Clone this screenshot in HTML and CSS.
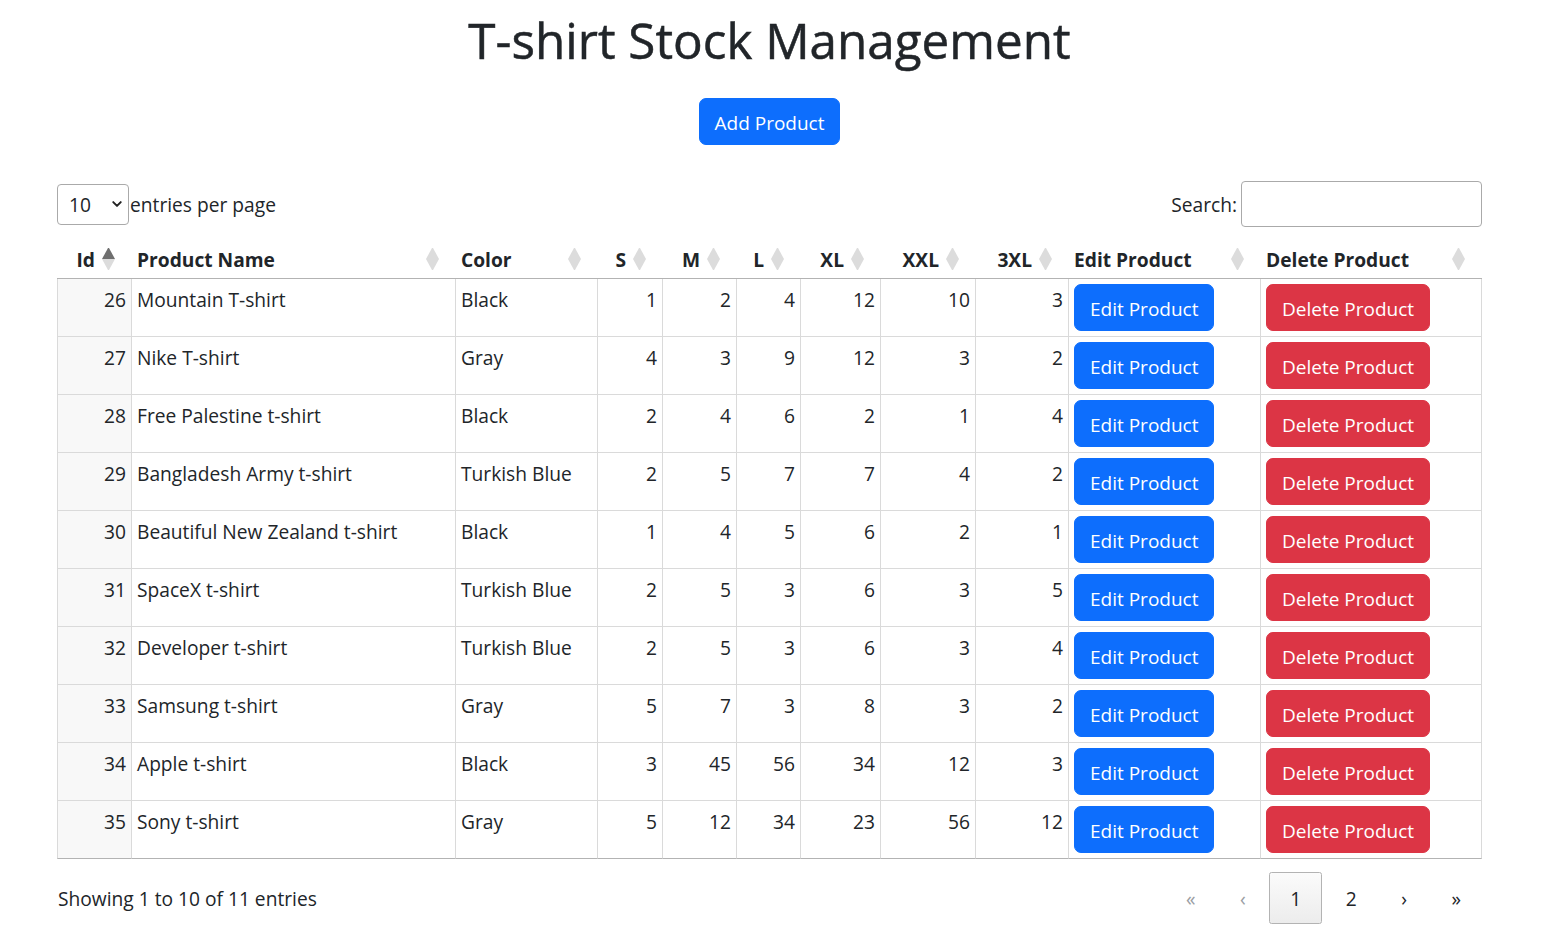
FILE: index.html
```html
<!DOCTYPE html>
<html lang="en">
<head>
<meta charset="utf-8">
<title>T-shirt Stock Management</title>
<link rel="stylesheet" href="styles.css">
</head>
<body>
<div class="page">
  <h1 class="title">T-shirt Stock Management</h1>
  <div class="add-row"><button class="btn btn-primary">Add Product</button></div>

  <div class="dt-top">
    <div class="dt-length">
      <div class="select-wrap">
        <select class="dt-select" aria-label="entries per page">
          <option>10</option><option>25</option><option>50</option>
        </select>
        <svg class="chev" viewBox="0 0 16 16" aria-hidden="true"><path d="M3 5.5l5 5 5-5" fill="none" stroke="#222" stroke-width="2.6" stroke-linecap="round" stroke-linejoin="round"/></svg>
      </div>
      <span class="dt-length-label">entries per page</span>
    </div>
    <div class="dt-search">
      <label for="q">Search:</label>
      <input id="q" class="dt-input" type="search">
    </div>
  </div>

  <table class="dt">
    <thead>
      <tr>
        <th class="num w-id"><div class="th-in"><span>Id</span><i class="sort asc"></i></div></th>
        <th class="w-name"><div class="th-in"><span>Product Name</span><i class="sort"></i></div></th>
        <th class="w-color"><div class="th-in"><span>Color</span><i class="sort"></i></div></th>
        <th class="num w-s"><div class="th-in"><span>S</span><i class="sort"></i></div></th>
        <th class="num w-m"><div class="th-in"><span>M</span><i class="sort"></i></div></th>
        <th class="num w-l"><div class="th-in"><span>L</span><i class="sort"></i></div></th>
        <th class="num w-xl"><div class="th-in"><span>XL</span><i class="sort"></i></div></th>
        <th class="num w-xxl"><div class="th-in"><span>XXL</span><i class="sort"></i></div></th>
        <th class="num w-3xl"><div class="th-in"><span>3XL</span><i class="sort"></i></div></th>
        <th class="w-edit"><div class="th-in"><span>Edit Product</span><i class="sort"></i></div></th>
        <th class="w-del"><div class="th-in"><span>Delete Product</span><i class="sort"></i></div></th>
      </tr>
    </thead>
    <tbody>
      <tr><td class="num">26</td><td>Mountain T-shirt</td><td>Black</td><td class="num">1</td><td class="num">2</td><td class="num">4</td><td class="num">12</td><td class="num">10</td><td class="num">3</td><td><button class="btn btn-primary">Edit Product</button></td><td><button class="btn btn-danger">Delete Product</button></td></tr>
      <tr><td class="num">27</td><td>Nike T-shirt</td><td>Gray</td><td class="num">4</td><td class="num">3</td><td class="num">9</td><td class="num">12</td><td class="num">3</td><td class="num">2</td><td><button class="btn btn-primary">Edit Product</button></td><td><button class="btn btn-danger">Delete Product</button></td></tr>
      <tr><td class="num">28</td><td>Free Palestine t-shirt</td><td>Black</td><td class="num">2</td><td class="num">4</td><td class="num">6</td><td class="num">2</td><td class="num">1</td><td class="num">4</td><td><button class="btn btn-primary">Edit Product</button></td><td><button class="btn btn-danger">Delete Product</button></td></tr>
      <tr><td class="num">29</td><td>Bangladesh Army t-shirt</td><td>Turkish Blue</td><td class="num">2</td><td class="num">5</td><td class="num">7</td><td class="num">7</td><td class="num">4</td><td class="num">2</td><td><button class="btn btn-primary">Edit Product</button></td><td><button class="btn btn-danger">Delete Product</button></td></tr>
      <tr><td class="num">30</td><td>Beautiful New Zealand t-shirt</td><td>Black</td><td class="num">1</td><td class="num">4</td><td class="num">5</td><td class="num">6</td><td class="num">2</td><td class="num">1</td><td><button class="btn btn-primary">Edit Product</button></td><td><button class="btn btn-danger">Delete Product</button></td></tr>
      <tr><td class="num">31</td><td>SpaceX t-shirt</td><td>Turkish Blue</td><td class="num">2</td><td class="num">5</td><td class="num">3</td><td class="num">6</td><td class="num">3</td><td class="num">5</td><td><button class="btn btn-primary">Edit Product</button></td><td><button class="btn btn-danger">Delete Product</button></td></tr>
      <tr><td class="num">32</td><td>Developer t-shirt</td><td>Turkish Blue</td><td class="num">2</td><td class="num">5</td><td class="num">3</td><td class="num">6</td><td class="num">3</td><td class="num">4</td><td><button class="btn btn-primary">Edit Product</button></td><td><button class="btn btn-danger">Delete Product</button></td></tr>
      <tr><td class="num">33</td><td>Samsung t-shirt</td><td>Gray</td><td class="num">5</td><td class="num">7</td><td class="num">3</td><td class="num">8</td><td class="num">3</td><td class="num">2</td><td><button class="btn btn-primary">Edit Product</button></td><td><button class="btn btn-danger">Delete Product</button></td></tr>
      <tr><td class="num">34</td><td>Apple t-shirt</td><td>Black</td><td class="num">3</td><td class="num">45</td><td class="num">56</td><td class="num">34</td><td class="num">12</td><td class="num">3</td><td><button class="btn btn-primary">Edit Product</button></td><td><button class="btn btn-danger">Delete Product</button></td></tr>
      <tr><td class="num">35</td><td>Sony t-shirt</td><td>Gray</td><td class="num">5</td><td class="num">12</td><td class="num">34</td><td class="num">23</td><td class="num">56</td><td class="num">12</td><td><button class="btn btn-primary">Edit Product</button></td><td><button class="btn btn-danger">Delete Product</button></td></tr>
    </tbody>
  </table>

  <div class="dt-bottom">
    <div class="dt-info">Showing 1 to 10 of 11 entries</div>
    <nav class="paging">
      <span class="pg disabled">«</span>
      <span class="pg disabled">‹</span>
      <span class="pg current">1</span>
      <span class="pg">2</span>
      <span class="pg">›</span>
      <span class="pg">»</span>
    </nav>
  </div>
</div>
</body>
</html>
```

FILE: styles.css
```css
* { box-sizing: border-box; }
html, body { margin: 0; padding: 0; background: #fff; }
body {
  font-family: "Open Sans", "Noto Sans", "Liberation Sans", sans-serif;
  font-size: 19.2px;
  line-height: 30px;
  color: #212529;
}
.page { width: 1425px; margin-left: 57px; padding-top: 12px; }
.title {
  margin: 0;
  text-align: center;
  font-size: 49.4px;
  line-height: 56px;
  font-weight: 500;
  color: #212529;
  -webkit-text-stroke: 0.5px #212529;
}
.add-row { display: flex; justify-content: center; margin-top: 30px; }
.btn {
  font: inherit;
  font-size: 19px;
  line-height: 30px;
  padding: 8.5px 15px 6.5px;
  border: 1px solid transparent;
  border-radius: 7px;
  color: #fff;
  cursor: pointer;
  display: inline-block;
  vertical-align: top;
}
.btn-primary { background: #0d6efd; border-color: #0d6efd; }
.btn-danger { background: #dc3545; border-color: #dc3545; }

.dt-top {
  display: flex;
  justify-content: space-between;
  align-items: center;
  margin-top: 36px;
  height: 46px;
}
.dt-length { display: flex; align-items: center; }
.select-wrap { position: relative; width: 72px; height: 41px; }
.dt-select {
  appearance: none;
  -webkit-appearance: none;
  width: 100%;
  height: 100%;
  font: inherit;
  color: #212529;
  padding: 1px 0 0 11px;
  border: 1px solid #aaa;
  border-radius: 4px;
  background: transparent;
}
.chev { position: absolute; right: 6px; top: 14px; width: 12px; height: 12px; pointer-events: none; }
.dt-length-label { margin-left: 1px; padding-top: 2px; }
.dt-search { display: flex; align-items: center; }
.dt-search label { padding-top: 2px; }
.dt-input {
  width: 241px;
  height: 46px;
  margin-left: 4px;
  border: 1px solid #aaa;
  border-radius: 4px;
  font: inherit;
  padding: 0 6px;
  background: #fff;
}

.dt {
  margin-top: 11px;
  width: 1425px;
  border-collapse: separate;
  border-spacing: 0;
  table-layout: fixed;
}
.w-id { width: 75px; }
.w-name { width: 324px; }
.w-color { width: 142px; }
.w-s { width: 65px; }
.w-m { width: 74px; }
.w-l { width: 64px; }
.w-xl { width: 80px; }
.w-xxl { width: 95px; }
.w-3xl { width: 93px; }
.w-edit { width: 192px; }
.w-del { width: 221px; }

.dt th {
  font-weight: 700;
  text-align: left;
  vertical-align: bottom;
  padding: 7px 17px 3px 5px;
  border-bottom: 1px solid #b3b3b3;
  white-space: nowrap;
}
.th-in { display: flex; align-items: center; justify-content: space-between; }
.dt th.num .th-in { justify-content: flex-end; gap: 7px; }
.sort { display: flex; flex-direction: column; width: 13px; flex: none; margin-top: -2px; }
.sort::before {
  content: "";
  border-left: 6.5px solid transparent;
  border-right: 6.5px solid transparent;
  border-bottom: 11px solid #dcdcdc;
}
.sort::after {
  content: "";
  border-left: 6.5px solid transparent;
  border-right: 6.5px solid transparent;
  border-top: 11px solid #dcdcdc;
}
.sort.asc::before { border-bottom-color: #6f6f6f; }

.dt td {
  padding: 6px 5px 4px;
  vertical-align: top;
  border-bottom: 1px solid #dadada;
  border-right: 1px solid #dadada;
  white-space: nowrap;
}
.dt td .btn { margin-top: -1px; margin-bottom: 1px; }
.dt td:first-child { border-left: 1px solid #dadada; background: #f8f8f8; }
.dt tbody tr:last-child td { border-bottom-color: #b3b3b3; }
.dt td.num { text-align: right; }

.dt-bottom {
  display: flex;
  justify-content: space-between;
  align-items: center;
  margin-top: 13px;
}
.dt-info { padding-left: 1px; padding-top: 2px; }
.paging { display: flex; gap: 2.5px; }
.pg {
  padding: 11px 20px 9px;
  border: 1px solid transparent;
  border-radius: 2.5px;
  line-height: 30px;
  color: #212529;
  text-align: center;
  min-width: 30px;
}
.pg.disabled { color: #9a9ea3; }
.pg.current { border-color: #b3b3b3; background: linear-gradient(#fbfbfb, #ececec); }
```
